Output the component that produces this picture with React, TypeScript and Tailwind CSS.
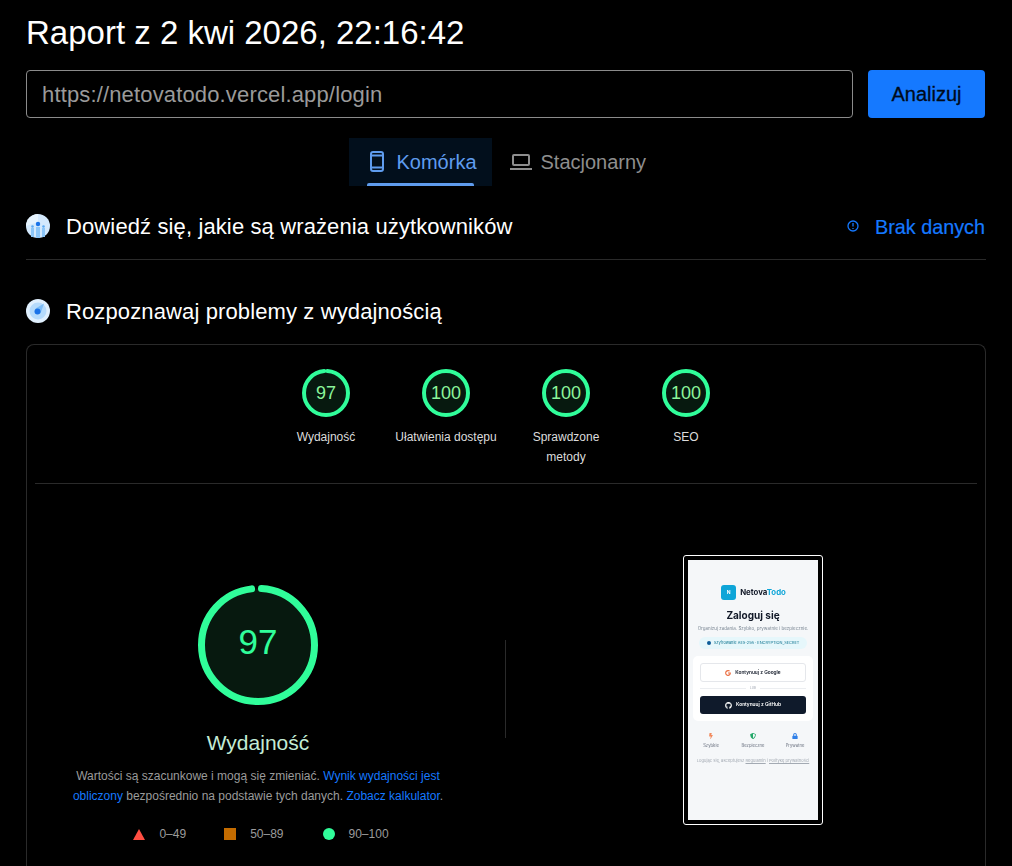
import { FaBolt, FaGithub, FaGoogle, FaLock, FaShieldAlt } from "react-icons/fa";

const sans = "[font-family:'Liberation_Sans',Arial,sans-serif]";

const gauges = [
  { score: 97, label: "Wydajność" },
  { score: 100, label: "Ułatwienia dostępu" },
  { score: 100, label: "Sprawdzone metody" },
  { score: 100, label: "SEO" },
];

function Gauge({ score, size, stroke }: { score: number; size: number; stroke: number }) {
  const r = (size - stroke) / 2;
  const c = 2 * Math.PI * r;
  return (
    <svg width={size} height={size} viewBox={`0 0 ${size} ${size}`} className="-rotate-90">
      <circle cx={size / 2} cy={size / 2} r={r} fill="#07190f" />
      <circle
        cx={size / 2}
        cy={size / 2}
        r={r}
        fill="none"
        stroke="#30fd9a"
        strokeWidth={stroke}
        strokeLinecap={score < 100 ? "round" : "butt"}
        strokeDasharray={score < 100 ? `${c * 0.97} ${c}` : undefined}
        strokeDashoffset={score < 100 ? -c * 0.01 : undefined}
      />
    </svg>
  );
}

function CruxIcon() {
  return (
    <svg width="24" height="24" viewBox="0 0 24 24">
      <circle cx="12" cy="12" r="12" fill="#d3e9fd" />
      <path d="M0 12A12 12 0 0 1 12 0v8z" fill="#e6f3fe" />
      <path d="M5 14h3v9H5zM10 13h4v11h-4zM16 14h3v9h-3z" fill="#8cc6f8" />
      <circle cx="12" cy="10" r="2.2" fill="#1a73e8" />
      <circle cx="6.5" cy="12.5" r="1.3" fill="#5aaaf2" />
      <circle cx="17.5" cy="12.5" r="1.3" fill="#5aaaf2" />
    </svg>
  );
}

function LabIcon() {
  return (
    <svg width="24" height="24" viewBox="0 0 24 24">
      <circle cx="12" cy="12" r="12" fill="#e0f0fe" />
      <circle cx="12" cy="12" r="8.5" fill="#b5dbfc" />
      <path d="M9.5 9.5 18 4.5 14.5 14.5z" fill="#7dbdf7" />
      <circle cx="11.5" cy="12.5" r="3" fill="#1a73e8" />
    </svg>
  );
}

function Preview() {
  return (
    <div className="flex h-[260px] w-[130px] flex-col items-center overflow-hidden bg-[#f5f7f9] pt-[25px] font-['Inter',sans-serif] text-[#111827] blur-[0.3px]">
      <div className="flex items-center gap-[4px] pl-px">
        <div className="flex h-[15px] w-[15px] items-center justify-center rounded-[3px] bg-[#0ea5d8] text-[5px] font-bold text-white">
          N
        </div>
        <span className="text-[7.8px] leading-[15px] font-bold">
          Netova<span className="text-[#0ea5d8]">Todo</span>
        </span>
      </div>
      <div className="mt-[8px] text-[10px] leading-[14px] font-bold whitespace-nowrap">Zaloguj się</div>
      <div className="mt-[4px] text-[4.5px] leading-[6px] whitespace-nowrap text-[#7b8794]">
        Organizuj zadania. Szybko, prywatnie i bezpiecznie.
      </div>
      <div className="mt-[5px] flex h-[12px] w-[108px] items-center justify-center gap-[3px] rounded-full bg-[#e6f7fb] text-[3.9px] whitespace-nowrap text-[#0e7490]">
        <span className="h-[4px] w-[4px] rounded-full bg-[#0c5c99]" />
        Szyfrowanie AES-256 · ENCRYPTION_SECRET
      </div>
      <div className="mt-[7px] w-[120px] rounded-[5px] bg-white px-[7px] pt-[7px] pb-[7px]">
        <div className="flex h-[19px] items-center justify-center gap-[4px] rounded-[3px] border border-[#e5e7eb] text-[4.8px] font-semibold">
          <FaGoogle className="text-[6px] text-[#ea6a3c]" />
          Kontynuuj z Google
        </div>
        <div className="mt-[3px] flex h-[6px] items-center gap-[4px]">
          <div className="h-px flex-1 bg-[#eceef1]" />
          <span className="text-[3px] text-[#9ca3af]">LUB</span>
          <div className="h-px flex-1 bg-[#eceef1]" />
        </div>
        <div className="mt-[5px] flex h-[18px] items-center justify-center gap-[4px] rounded-[3px] bg-[#0f1a2b] text-[4.8px] font-semibold text-white">
          <FaGithub className="text-[7px]" />
          Kontynuuj z GitHub
        </div>
      </div>
      <div className="mt-[12px] flex w-[126px] text-[4.2px] text-[#6b7280]">
        <div className="flex flex-1 flex-col items-center gap-[4px]">
          <FaBolt className="text-[6px] text-[#f2895c]" />
          Szybkie
        </div>
        <div className="flex flex-1 flex-col items-center gap-[4px]">
          <FaShieldAlt className="text-[6px] text-[#22a868]" />
          Bezpieczne
        </div>
        <div className="flex flex-1 flex-col items-center gap-[4px]">
          <FaLock className="text-[6px] text-[#2f7fe8]" />
          Prywatne
        </div>
      </div>
      <div className="mt-[9px] text-[4.1px] whitespace-nowrap text-[#a3aab3]">
        Logując się, akceptujesz <span className="underline">Regulamin</span> i{" "}
        <span className="underline">Politykę prywatności</span>
      </div>
    </div>
  );
}

export default function App() {
  return (
    <div className={`h-[866px] w-[1012px] overflow-hidden bg-black px-[26px] ${sans}`}>
      <h1 className="pt-[14px] text-[33px] leading-[38px] text-white">Raport z 2 kwi 2026, 22:16:42</h1>

      <div className="mt-[18px] flex gap-[15px] pr-px">
        <div className="flex h-[48px] w-[827px] items-center rounded-[4px] border border-[#8b8b8b] px-[15px] text-[22px] tracking-[0.15px] text-[#9a9a9a]">
          https://netovatodo.vercel.app/login
        </div>
        <button className="h-[48px] w-[117px] rounded-[4px] bg-[#1579ff] text-[20px] text-[#000a1a] [-webkit-text-stroke:0.3px]">
          Analizuj
        </button>
      </div>

      <div className="mt-[20px] flex justify-center">
        <div className="relative flex h-[48px] w-[143px] items-center gap-[6px] bg-[#020f1c] pl-[18px] text-[20px] text-[#5f9cee]">
          <svg width="24" height="24" viewBox="0 0 24 24" fill="none" stroke="#5f9cee" strokeWidth="2">
            <rect x="4" y="2" width="12" height="19" rx="2" />
            <path d="M4 5.5h12M4 17.5h12" />
          </svg>
          Komórka
          <div className="absolute bottom-0 left-[18px] h-[3px] w-[107px] rounded-t-[2px] bg-[#5f9cee]" />
        </div>
        <div className="flex h-[48px] w-[172px] items-center gap-[7px] pl-[18px] text-[20px] text-[#8e8e8e]">
          <svg width="24" height="24" viewBox="0 0 24 24" fill="none">
            <rect x="3" y="5" width="16" height="10" rx="1" stroke="#8e8e8e" strokeWidth="2" />
            <rect x="0" y="18" width="22" height="2" fill="#8e8e8e" />
          </svg>
          Stacjonarny
        </div>
      </div>

      <div className="mt-[23px] flex h-[34px] items-center">
        <CruxIcon />
        <span className="ml-[16px] text-[22px] tracking-[0.12px] text-white">
          Dowiedź się, jakie są wrażenia użytkowników
        </span>
        <svg className="mr-[16px] ml-auto" width="12" height="12" viewBox="0 0 12 12" fill="none">
          <circle cx="6" cy="6" r="5" stroke="#1579ff" strokeWidth="1.3" />
          <path d="M6 3v3.6M6 8v1.1" stroke="#1579ff" strokeWidth="1.3" />
        </svg>
        <span className="mt-[3px] mr-px text-[19.8px] text-[#1579ff] [-webkit-text-stroke:0.2px]">Brak danych</span>
      </div>
      <div className="mt-[16px] h-px bg-[#2a2a2a]" />

      <div className="mt-[34px] flex h-[34px] items-center">
        <LabIcon />
        <span className="ml-[16px] text-[22px] tracking-[0.12px] text-white">Rozpoznawaj problemy z wydajnością</span>
      </div>

      <div className="mt-[16px] h-[600px] rounded-t-[8px] border border-b-0 border-[#2a2a2a] px-[8px] pt-[24px]">
        <div className="flex justify-center border-b border-[#2a2a2a] pb-[16px]">
          {gauges.map((g) => (
            <div key={g.label} className="flex w-[120px] flex-col items-center">
              <div className="relative h-[48px] w-[48px]">
                <Gauge score={g.score} size={48} stroke={4} />
                <span className="absolute inset-0 flex items-center justify-center text-[18px] text-[#8cf59b]">
                  {g.score}
                </span>
              </div>
              <div className="mt-[10px] w-[104px] text-center text-[12px] leading-[20px] text-[#dcdcdc]">{g.label}</div>
            </div>
          ))}
        </div>

        <div className="flex">
          <div className="flex w-[446px] flex-col items-center pt-[101px]">
            <div className="relative h-[120px] w-[120px]">
              <Gauge score={97} size={120} stroke={7} />
              <span className="absolute inset-0 flex items-center justify-center pb-[5px] text-[35px] text-[#30fd9a]">
                97
              </span>
            </div>
            <div className="mt-[24px] text-[21px] leading-[28px] text-[#c3ecd6]">Wydajność</div>
            <p className="mt-[9px] w-[380px] text-center text-[12px] leading-[20px] text-[#9b9b9b]">
              Wartości są szacunkowe i mogą się zmieniać.{" "}
              <span className="text-[#1579ff]">Wynik wydajności jest obliczony</span> bezpośrednio na podstawie tych
              danych. <span className="text-[#1579ff]">Zobacz kalkulator</span>.
            </p>
            <div className="mt-[19px] flex items-center pl-[6px] text-[12px] text-[#9b9b9b]">
              <svg width="12" height="12" viewBox="0 0 12 12" className="mr-[14px]">
                <path d="M6 1 12 12H0z" fill="#ff4e42" />
              </svg>
              <span className="mr-[38px]">0–49</span>
              <span className="mr-[14px] h-[12px] w-[12px] bg-[#c46c00]" />
              <span className="mr-[39px]">50–89</span>
              <span className="mr-[14px] h-[12px] w-[12px] rounded-full bg-[#30fd9a]" />
              <span>90–100</span>
            </div>
          </div>
          <div className="mt-[156px] ml-[24px] h-[98px] w-px bg-[#2a2a2a]" />
          <div className="ml-[177px] pt-[71px]">
            <div className="rounded-[3px] border border-white bg-black p-[4px]">
              <Preview />
            </div>
          </div>
        </div>
      </div>
    </div>
  );
}
